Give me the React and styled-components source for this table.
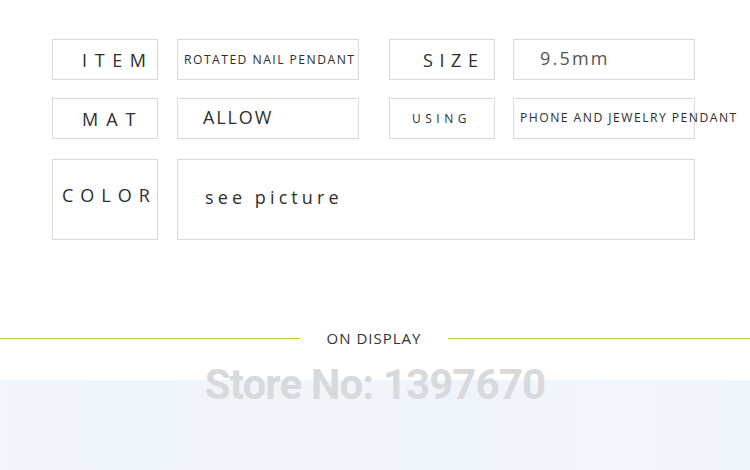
import React from 'react'
import styled, { createGlobalStyle } from 'styled-components'

const GlobalStyle = createGlobalStyle`
  html, body {
    margin: 0;
    padding: 0;
    background: #ffffff;
  }
  body {
    font-family: "Open Sans", "Noto Sans", "DejaVu Sans", sans-serif;
    color: #333;
  }
`

const Page = styled.div`
  width: 750px;
  height: 470px;
  overflow: hidden;
  background: #fff;
`

const Specs = styled.div`
  display: flex;
  flex-direction: column;
  gap: 18px;
  padding: 39px 0 0 52px;
`

const Row = styled.div`
  display: flex;
  gap: 19px;
  height: ${p => p.$tall ? '81px' : '41px'};
  ${p => p.$tall && 'margin-top: 2px;'}
`

const Pair = styled.div`
  display: flex;
  gap: ${p => p.$gap || 19}px;
  & + & {
    margin-left: 11px;
  }
`

const Cell = styled.div`
  box-sizing: border-box;
  width: ${p => p.$w}px;
  height: 100%;
  border: 1px solid #d9d9d9;
  display: flex;
  align-items: center;
  padding-left: ${p => p.$indent}px;
  padding-bottom: ${p => p.$lift || 0}px;
  white-space: nowrap;
  overflow: visible;
  font-size: ${p => p.$size}px;
  letter-spacing: ${p => p.$spacing}px;
  color: ${p => p.$color || '#2e2e2e'};
`

const Divider = styled.div`
  display: flex;
  align-items: center;
  margin-top: 89px;
  height: 18px;
`

const Line = styled.div`
  height: 1px;
  background: #dcbb52;
  width: ${p => p.$w}px;
`

const DividerText = styled.div`
  flex: 1;
  text-align: center;
  font-size: 15px;
  letter-spacing: 1px;
  color: #333;
`

const Showcase = styled.div`
  position: relative;
  margin-top: 13px;
  padding-top: 20px;
`

const Photo = styled.div`
  height: 100px;
  background:
    linear-gradient(90deg, rgba(255,255,255,0.2) 0, rgba(255,255,255,0) 120px, rgba(255,255,255,0.15) 300px, rgba(255,255,255,0) 460px, rgba(255,255,255,0.25) 620px, rgba(255,255,255,0) 750px),
    #eef4fb;
`

const Watermark = styled.div`
  position: absolute;
  left: 0;
  right: 0;
  top: 1px;
  text-align: center;
  font-family: Roboto, "Liberation Sans", sans-serif;
  font-weight: 700;
  font-size: 42px;
  letter-spacing: -0.9px;
  line-height: 48px;
  color: #d7d9dc;
`

const rows = [
  [
    { label: 'ITEM', value: 'ROTATED NAIL PENDANT', l: { indent: 29, size: 18, spacing: 7.6 }, v: { indent: 6, size: 12.2, spacing: 1.45 } },
    { label: 'SIZE', value: '9.5mm', l: { indent: 33, size: 18, spacing: 6.6, lift: -3 }, v: { indent: 26, size: 18, spacing: 2.2, color: '#555', lift: 3 } }
  ],
  [
    { label: 'MAT', value: 'ALLOW', l: { indent: 29, size: 18, spacing: 8 }, v: { indent: 25, size: 18, spacing: 1.9, lift: 3 } },
    { label: 'USING', value: 'PHONE AND JEWELRY PENDANT', l: { indent: 22, size: 12, spacing: 4.5 }, v: { indent: 6, size: 12.2, spacing: 1.45, lift: 2 } }
  ]
]

const App = () => {
  return (
    <Page>
      <GlobalStyle />
      <Specs>
        {rows.map((row, i) => (
          <Row key={i}>
            {row.map((p, j) => (
              <Pair key={p.label} $gap={j === 1 ? 18 : 19}>
                <Cell $w={106} $indent={p.l.indent} $size={p.l.size} $spacing={p.l.spacing} $lift={p.l.lift}>{p.label}</Cell>
                <Cell $w={182} $indent={p.v.indent} $size={p.v.size} $spacing={p.v.spacing} $color={p.v.color} $lift={p.v.lift}>{p.value}</Cell>
              </Pair>
            ))}
          </Row>
        ))}
        <Row $tall>
          <Pair>
            <Cell $w={106} $indent={9} $size={18} $spacing={7} $lift={10}>COLOR</Cell>
            <Cell $w={518} $indent={27} $size={18} $spacing={4.1} $lift={6}>see picture</Cell>
          </Pair>
        </Row>
      </Specs>
      <Divider>
        <Line $w={300} />
        <DividerText>ON DISPLAY</DividerText>
        <Line $w={302} />
      </Divider>
      <Showcase>
        <Watermark>Store No: 1397670</Watermark>
        <Photo />
      </Showcase>
    </Page>
  )
}

export default App
